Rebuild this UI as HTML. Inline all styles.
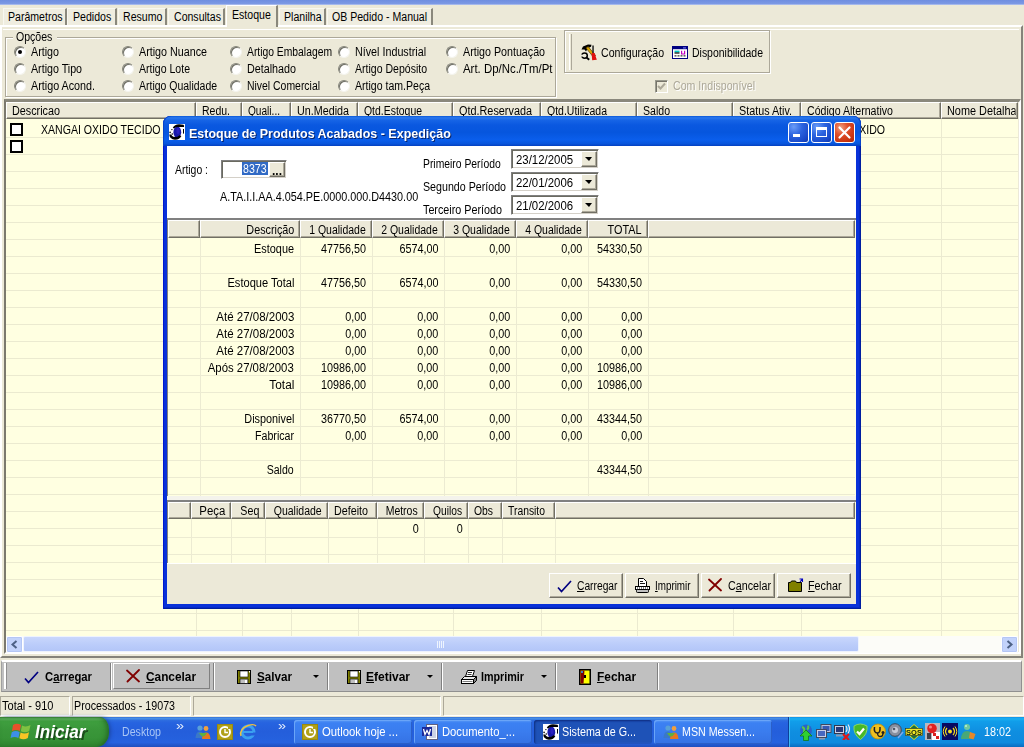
<!DOCTYPE html>
<html><head><meta charset="utf-8"><title>Sistema</title>
<style>
*{box-sizing:border-box;margin:0;padding:0}
html,body{width:1024px;height:747px;overflow:hidden;background:#ece9d8;font-family:"Liberation Sans",sans-serif;font-size:12px;color:#000}
div,span,i,b,u{position:absolute}
u{position:static}
.t{white-space:nowrap;line-height:14px;font-size:12px;transform:scaleX(.88)}
.w{color:#fff}
.tab{top:8px;height:17px;background:#efede0;border-right:2px solid #8a887c;border-left:1px solid #f8f7f0;border-top:1px solid #f8f7f0}
.tab.act{top:5px;height:22px;background:#ece9d8;z-index:2;border-left-color:#fff;border-top-color:#fff}
.grp{border:1px solid #aca899;box-shadow:1px 1px 0 #fff, inset 1px 1px 0 #fff}
.rbi{width:12px;height:12px;border-radius:50%;background:#fff;border:1px solid #85857a;border-right-color:#f4f4ee;border-bottom-color:#f4f4ee;box-shadow:inset 1px 1px 0 #6e6e64}
.dot{width:4px;height:4px;border-radius:50%;background:#000}
.hdr{background:#ece9d8;border-top:1px solid #fff;border-left:1px solid #fff;border-right:1px solid #716f64;border-bottom:1px solid #716f64;box-shadow:inset -1px -1px 0 #aca899}
.sunk{border:1px solid #808080;border-right-color:#fff;border-bottom-color:#fff;box-shadow:inset 1px 1px 0 #6a6a60, inset -1px -1px 0 #d4d0c8;background:#fff}
.btn{background:#ece9d8;border:1px solid #fff;border-right-color:#716f64;border-bottom-color:#716f64;box-shadow:inset -1px -1px 0 #aca899}
</style></head><body>

<div style="left:0;top:0;width:1024px;height:5px;background:linear-gradient(#6f8ee0 0,#7b98e4 70%,#b9c8ef 100%)"></div>
<div class="tab" style="left:3px;width:64px"></div>
<span class="t " style="top:10px;left:8px;transform-origin:0 0;z-index:3;">Parâmetros</span>
<div class="tab" style="left:67px;width:50px"></div>
<span class="t " style="top:10px;left:73px;transform-origin:0 0;z-index:3;">Pedidos</span>
<div class="tab" style="left:118px;width:49px"></div>
<span class="t " style="top:10px;left:123px;transform-origin:0 0;z-index:3;">Resumo</span>
<div class="tab" style="left:168px;width:57px"></div>
<span class="t " style="top:10px;left:174px;transform-origin:0 0;z-index:3;">Consultas</span>
<div class="tab act" style="left:226px;width:52px"></div>
<span class="t " style="top:8px;left:232px;transform-origin:0 0;z-index:3;">Estoque</span>
<div class="tab" style="left:279px;width:47px"></div>
<span class="t " style="top:10px;left:284px;transform-origin:0 0;z-index:3;">Planilha</span>
<div class="tab" style="left:327px;width:106px"></div>
<span class="t " style="top:10px;left:332px;transform-origin:0 0;z-index:3;">OB Pedido - Manual</span>
<div style="left:0;top:25px;width:1023px;height:633px;border-top:2px solid #fff;border-left:2px solid #fff;border-right:2px solid #85837a;border-bottom:2px solid #85837a;z-index:1"></div>
<div style="left:3px;top:29px;width:1016px;height:1px;background:#fff;z-index:1"></div>
<div style="left:0;top:0;width:1024px;height:747px;z-index:4;will-change:transform" id="main">
<div class="grp" style="left:5px;top:37px;width:551px;height:60px"></div>
<div style="left:13px;top:30px;width:44px;height:14px;background:#ece9d8"></div>
<span class="t " style="top:30px;left:16px;transform-origin:0 0;">Opções</span>
<i class="rbi" style="left:14px;top:46px"></i>
<i class="dot" style="left:18px;top:50px"></i>
<span class="t " style="top:44.5px;left:31px;transform-origin:0 0;transform:scaleX(0.893);">Artigo</span>
<i class="rbi" style="left:14px;top:63px"></i>
<span class="t " style="top:61.5px;left:31px;transform-origin:0 0;transform:scaleX(0.889);">Artigo Tipo</span>
<i class="rbi" style="left:14px;top:80px"></i>
<span class="t " style="top:78.5px;left:31px;transform-origin:0 0;transform:scaleX(0.897);">Artigo Acond.</span>
<i class="rbi" style="left:122px;top:46px"></i>
<span class="t " style="top:44.5px;left:139px;transform-origin:0 0;transform:scaleX(0.894);">Artigo Nuance</span>
<i class="rbi" style="left:122px;top:63px"></i>
<span class="t " style="top:61.5px;left:139px;transform-origin:0 0;transform:scaleX(0.879);">Artigo Lote</span>
<i class="rbi" style="left:122px;top:80px"></i>
<span class="t " style="top:78.5px;left:139px;transform-origin:0 0;transform:scaleX(0.873);">Artigo Qualidade</span>
<i class="rbi" style="left:230px;top:46px"></i>
<span class="t " style="top:44.5px;left:247px;transform-origin:0 0;transform:scaleX(0.861);">Artigo Embalagem</span>
<i class="rbi" style="left:230px;top:63px"></i>
<span class="t " style="top:61.5px;left:247px;transform-origin:0 0;transform:scaleX(0.896);">Detalhado</span>
<i class="rbi" style="left:230px;top:80px"></i>
<span class="t " style="top:78.5px;left:247px;transform-origin:0 0;transform:scaleX(0.869);">Nivel Comercial</span>
<i class="rbi" style="left:338px;top:46px"></i>
<span class="t " style="top:44.5px;left:355px;transform-origin:0 0;transform:scaleX(0.895);">Nível Industrial</span>
<i class="rbi" style="left:338px;top:63px"></i>
<span class="t " style="top:61.5px;left:355px;transform-origin:0 0;transform:scaleX(0.878);">Artigo Depósito</span>
<i class="rbi" style="left:338px;top:80px"></i>
<span class="t " style="top:78.5px;left:355px;transform-origin:0 0;transform:scaleX(0.879);">Artigo tam.Peça</span>
<i class="rbi" style="left:446px;top:46px"></i>
<span class="t " style="top:44.5px;left:463px;transform-origin:0 0;transform:scaleX(0.891);">Artigo Pontuação</span>
<i class="rbi" style="left:446px;top:63px"></i>
<span class="t " style="top:61.5px;left:463px;transform-origin:0 0;transform:scaleX(0.952);">Art. Dp/Nc./Tm/Pt</span>
<div class="grp" style="left:564px;top:30px;width:206px;height:43px"></div>
<div style="left:569px;top:34px;width:3px;height:36px;border-left:1px solid #fff;border-right:1px solid #aca899"></div>
<span class="t " style="top:46px;left:601px;transform-origin:0 0;transform:scaleX(0.883);">Configuração</span>
<span class="t " style="top:46px;left:692px;transform-origin:0 0;transform:scaleX(0.872);">Disponibilidade</span>
<div style="left:655px;top:80px;width:13px;height:13px;border:1px solid #9a9a8e;border-right-color:#fff;border-bottom-color:#fff;box-shadow:inset 1px 1px 0 #76746a;background:#ece9d8"></div>
<span class="t " style="top:80px;left:674px;transform-origin:0 0;transform:scaleX(0.885);color:#fff">Com Indisponível</span>
<span class="t " style="top:79px;left:673px;transform-origin:0 0;transform:scaleX(0.885);color:#aca899">Com Indisponível</span>
<div style="left:4px;top:99px;width:1017px;height:555px;background:#ffffe1;border:2px solid #7b796e;border-top:3px solid #8a887c;border-right-color:#fff;border-bottom-color:#fff;box-shadow:inset -1px -1px 0 #ece9d8"></div>
<div style="left:6px;top:137px;width:1012px;height:1px;background:#ebead0"></div>
<div style="left:6px;top:154px;width:1012px;height:1px;background:#ebead0"></div>
<div style="left:6px;top:171px;width:1012px;height:1px;background:#ebead0"></div>
<div style="left:6px;top:188px;width:1012px;height:1px;background:#ebead0"></div>
<div style="left:6px;top:205px;width:1012px;height:1px;background:#ebead0"></div>
<div style="left:6px;top:222px;width:1012px;height:1px;background:#ebead0"></div>
<div style="left:6px;top:239px;width:1012px;height:1px;background:#ebead0"></div>
<div style="left:6px;top:256px;width:1012px;height:1px;background:#ebead0"></div>
<div style="left:6px;top:273px;width:1012px;height:1px;background:#ebead0"></div>
<div style="left:6px;top:290px;width:1012px;height:1px;background:#ebead0"></div>
<div style="left:6px;top:307px;width:1012px;height:1px;background:#ebead0"></div>
<div style="left:6px;top:324px;width:1012px;height:1px;background:#ebead0"></div>
<div style="left:6px;top:341px;width:1012px;height:1px;background:#ebead0"></div>
<div style="left:6px;top:358px;width:1012px;height:1px;background:#ebead0"></div>
<div style="left:6px;top:375px;width:1012px;height:1px;background:#ebead0"></div>
<div style="left:6px;top:392px;width:1012px;height:1px;background:#ebead0"></div>
<div style="left:6px;top:409px;width:1012px;height:1px;background:#ebead0"></div>
<div style="left:6px;top:426px;width:1012px;height:1px;background:#ebead0"></div>
<div style="left:6px;top:443px;width:1012px;height:1px;background:#ebead0"></div>
<div style="left:6px;top:460px;width:1012px;height:1px;background:#ebead0"></div>
<div style="left:6px;top:477px;width:1012px;height:1px;background:#ebead0"></div>
<div style="left:6px;top:494px;width:1012px;height:1px;background:#ebead0"></div>
<div style="left:6px;top:511px;width:1012px;height:1px;background:#ebead0"></div>
<div style="left:6px;top:528px;width:1012px;height:1px;background:#ebead0"></div>
<div style="left:6px;top:545px;width:1012px;height:1px;background:#ebead0"></div>
<div style="left:6px;top:562px;width:1012px;height:1px;background:#ebead0"></div>
<div style="left:6px;top:579px;width:1012px;height:1px;background:#ebead0"></div>
<div style="left:6px;top:596px;width:1012px;height:1px;background:#ebead0"></div>
<div style="left:6px;top:613px;width:1012px;height:1px;background:#ebead0"></div>
<div style="left:6px;top:630px;width:1012px;height:1px;background:#ebead0"></div>
<div class="hdr" style="left:6px;top:102px;width:190px;height:17px"></div>
<span class="t " style="top:104px;left:12px;transform-origin:0 0;transform:scaleX(0.9);">Descricao</span>
<div class="hdr" style="left:196px;top:102px;width:46px;height:17px"></div>
<span class="t " style="top:104px;left:202px;transform-origin:0 0;transform:scaleX(0.875);">Redu.</span>
<div style="left:196px;top:119px;width:1px;height:517px;background:#ebead0"></div>
<div class="hdr" style="left:242px;top:102px;width:49px;height:17px"></div>
<span class="t " style="top:104px;left:248px;transform-origin:0 0;transform:scaleX(0.842);">Quali...</span>
<div style="left:242px;top:119px;width:1px;height:517px;background:#ebead0"></div>
<div class="hdr" style="left:291px;top:102px;width:67px;height:17px"></div>
<span class="t " style="top:104px;left:297px;transform-origin:0 0;transform:scaleX(0.896);">Un.Medida</span>
<div style="left:291px;top:119px;width:1px;height:517px;background:#ebead0"></div>
<div class="hdr" style="left:358px;top:102px;width:95px;height:17px"></div>
<span class="t " style="top:104px;left:364px;transform-origin:0 0;transform:scaleX(0.87);">Qtd.Estoque</span>
<div style="left:358px;top:119px;width:1px;height:517px;background:#ebead0"></div>
<div class="hdr" style="left:453px;top:102px;width:88px;height:17px"></div>
<span class="t " style="top:104px;left:459px;transform-origin:0 0;transform:scaleX(0.905);">Qtd.Reservada</span>
<div style="left:453px;top:119px;width:1px;height:517px;background:#ebead0"></div>
<div class="hdr" style="left:541px;top:102px;width:96px;height:17px"></div>
<span class="t " style="top:104px;left:547px;transform-origin:0 0;transform:scaleX(0.874);">Qtd.Utilizada</span>
<div style="left:541px;top:119px;width:1px;height:517px;background:#ebead0"></div>
<div class="hdr" style="left:637px;top:102px;width:96px;height:17px"></div>
<span class="t " style="top:104px;left:643px;transform-origin:0 0;">Saldo</span>
<div style="left:637px;top:119px;width:1px;height:517px;background:#ebead0"></div>
<div class="hdr" style="left:733px;top:102px;width:68px;height:17px"></div>
<span class="t " style="top:104px;left:739px;transform-origin:0 0;transform:scaleX(0.897);">Status Ativ.</span>
<div style="left:733px;top:119px;width:1px;height:517px;background:#ebead0"></div>
<div class="hdr" style="left:801px;top:102px;width:140px;height:17px"></div>
<span class="t " style="top:104px;left:807px;transform-origin:0 0;transform:scaleX(0.883);">Código Alternativo</span>
<div style="left:801px;top:119px;width:1px;height:517px;background:#ebead0"></div>
<div class="hdr" style="left:941px;top:102px;width:77px;height:17px"></div>
<span class="t " style="top:104px;left:947px;transform-origin:0 0;transform:scaleX(0.907);clip-path:inset(0 7px 0 0);">Nome Detalhac</span>
<div style="left:941px;top:119px;width:1px;height:517px;background:#ebead0"></div>
<div style="left:10px;top:123px;width:13px;height:13px;border:2px solid #000;background:#fff"></div>
<div style="left:10px;top:140px;width:13px;height:13px;border:2px solid #000;background:#fff"></div>
<span class="t " style="top:122.5px;left:41px;transform-origin:0 0;">XANGAI OXIDO TECIDO</span>
<span class="t " style="top:122.5px;left:808px;transform-origin:0 0;transform:scaleX(0.882);">XANGAI OXIDO</span>
<div style="left:6px;top:636px;width:1012px;height:17px;background:#fcfcf8"></div>
<div style="left:6px;top:636px;width:17px;height:17px;background:#c3d3fb;border:1px solid #fff;border-radius:2px;box-shadow:inset 0 0 0 1px #b4c6f5"></div>
<div style="left:1001px;top:636px;width:17px;height:17px;background:#c3d3fb;border:1px solid #fff;border-radius:2px;box-shadow:inset 0 0 0 1px #b4c6f5"></div>
<div style="left:23px;top:636px;width:836px;height:16px;background:linear-gradient(#c9d7fc,#bccdfa 50%,#b3c6f8);border:1px solid #eef3fe;border-radius:2px"></div>
<div style="left:1px;top:660px;width:1021px;height:32px;background:#c0c0c0;border-top:2px solid #fff;border-left:1px solid #a0a0a0;border-bottom:1px solid #909090;border-right:1px solid #909090"></div>
<div style="left:0;top:696px;width:1024px;height:21px;background:#ece9d8"></div>
<div style="left:4px;top:663px;width:3px;height:26px;border-left:2px solid #fff;border-right:1px solid #909090"></div>
<div style="left:110px;top:663px;width:2px;height:27px;border-left:1px solid #808080;border-right:1px solid #fff"></div>
<div style="left:213px;top:663px;width:2px;height:27px;border-left:1px solid #808080;border-right:1px solid #fff"></div>
<div style="left:327px;top:663px;width:2px;height:27px;border-left:1px solid #808080;border-right:1px solid #fff"></div>
<div style="left:441px;top:663px;width:2px;height:27px;border-left:1px solid #808080;border-right:1px solid #fff"></div>
<div style="left:555px;top:663px;width:2px;height:27px;border-left:1px solid #808080;border-right:1px solid #fff"></div>
<div style="left:657px;top:663px;width:2px;height:27px;border-left:1px solid #808080;border-right:1px solid #fff"></div>
<div style="left:113px;top:663px;width:97px;height:26px;border:1px solid #fff;border-right-color:#808080;border-bottom-color:#808080"></div>
<span class="t " style="top:670px;left:45px;transform-origin:0 0;font-weight:bold;transform:scaleX(0.939);">C<u>a</u>rregar</span>
<span class="t " style="top:670px;left:146px;transform-origin:0 0;font-weight:bold;transform:scaleX(0.986);"><u>C</u>ancelar</span>
<span class="t " style="top:670px;left:257px;transform-origin:0 0;font-weight:bold;transform:scaleX(0.972);"><u>S</u>alvar</span>
<span class="t " style="top:670px;left:366px;transform-origin:0 0;font-weight:bold;transform:scaleX(1.0);"><u>E</u>fetivar</span>
<span class="t " style="top:670px;left:481px;transform-origin:0 0;font-weight:bold;transform:scaleX(0.896);">Imprimir</span>
<span class="t " style="top:670px;left:597px;transform-origin:0 0;font-weight:bold;transform:scaleX(0.991);"><u>F</u>echar</span>
<div style="left:313px;top:675px;width:0;height:0;border-left:3px solid transparent;border-right:3px solid transparent;border-top:3px solid #000"></div>
<div style="left:427px;top:675px;width:0;height:0;border-left:3px solid transparent;border-right:3px solid transparent;border-top:3px solid #000"></div>
<div style="left:541px;top:675px;width:0;height:0;border-left:3px solid transparent;border-right:3px solid transparent;border-top:3px solid #000"></div>
<div style="left:0px;top:696px;width:70px;height:20px;border:1px solid #aca899;border-right-color:#fff;border-bottom-color:#fff"></div>
<div style="left:72px;top:696px;width:119px;height:20px;border:1px solid #aca899;border-right-color:#fff;border-bottom-color:#fff"></div>
<div style="left:193px;top:696px;width:248px;height:20px;border:1px solid #aca899;border-right-color:#fff;border-bottom-color:#fff"></div>
<div style="left:443px;top:696px;width:581px;height:20px;border:1px solid #aca899;border-right-color:#fff;border-bottom-color:#fff"></div>
<span class="t " style="top:699px;left:2px;transform-origin:0 0;transform:scaleX(0.919);">Total - 910</span>
<span class="t " style="top:699px;left:74px;transform-origin:0 0;transform:scaleX(0.891);">Processados - 19073</span>
<div style="left:0;top:717px;width:1024px;height:30px;background:linear-gradient(#3168d5 0,#4993e6 4%,#2c6be0 12%,#2663e0 20%,#245edb 50%,#2562df 85%,#1f4ebd 100%)"></div>
<div style="left:0;top:717px;width:109px;height:30px;border-radius:0 9px 12px 0/0 13px 15px 0;background:linear-gradient(#388438 0,#5eb05e 6%,#3f9f3f 14%,#3a973a 40%,#379337 70%,#2f862f 100%);box-shadow:inset -3px 0 6px -2px #1e5a1e, 2px 0 4px -1px #1a3f96"></div>
<span class="t " style="top:723.5px;left:36.5px;transform-origin:0 0;font-size:18px;font-weight:bold;font-style:italic;transform:scaleX(0.952);color:#1c4f1c;line-height:20px;">Iniciar</span>
<span class="t " style="top:722.3px;left:35.3px;transform-origin:0 0;font-size:18px;font-weight:bold;font-style:italic;transform:scaleX(0.952);color:#fff;line-height:20px;">Iniciar</span>
<span class="t " style="top:725px;left:122px;transform-origin:0 0;transform:scaleX(0.886);color:#a9c6f5;">Desktop</span>
<span class="t " style="top:719px;left:176px;transform-origin:0 0;font-size:13px;transform:scaleX(1.106);color:#dfe9fb;">»</span>
<span class="t " style="top:719px;left:278px;transform-origin:0 0;font-size:13px;transform:scaleX(1.106);color:#dfe9fb;">»</span>
<div style="left:294px;top:720px;width:118px;height:24px;border-radius:3px;background:linear-gradient(#5a9af5 0,#3c81f3 12%,#3a7cee 50%,#3572e4 100%);box-shadow:inset 1px 1px 0 #6aa5f8, inset -1px -1px 0 #2a5fc8"></div>
<span class="t " style="top:725px;left:322px;transform-origin:0 0;transform:scaleX(0.942);color:#fff;">Outlook hoje ...</span>
<div style="left:414px;top:720px;width:118px;height:24px;border-radius:3px;background:linear-gradient(#5a9af5 0,#3c81f3 12%,#3a7cee 50%,#3572e4 100%);box-shadow:inset 1px 1px 0 #6aa5f8, inset -1px -1px 0 #2a5fc8"></div>
<span class="t " style="top:725px;left:442px;transform-origin:0 0;transform:scaleX(0.936);color:#fff;">Documento_...</span>
<div style="left:534px;top:720px;width:118px;height:24px;border-radius:3px;background:linear-gradient(#1a44ae 0,#1e52b7 10%,#1e52b7 90%,#2458c4 100%);box-shadow:inset 1px 1px 2px #0e2f80"></div>
<span class="t " style="top:725px;left:562px;transform-origin:0 0;transform:scaleX(0.895);color:#fff;">Sistema de G...</span>
<div style="left:654px;top:720px;width:118px;height:24px;border-radius:3px;background:linear-gradient(#5a9af5 0,#3c81f3 12%,#3a7cee 50%,#3572e4 100%);box-shadow:inset 1px 1px 0 #6aa5f8, inset -1px -1px 0 #2a5fc8"></div>
<span class="t " style="top:725px;left:682px;transform-origin:0 0;transform:scaleX(0.89);color:#fff;">MSN Messen...</span>
<div style="left:788px;top:717px;width:236px;height:30px;background:linear-gradient(#1290e8 0,#19b0f2 6%,#119eea 14%,#0f8ee0 50%,#0e8ade 85%,#0a6bc0 100%);border-left:1px solid #0c3f9b;box-shadow:inset 1px 0 0 #3fbaf5"></div>
<span class="t " style="top:725px;left:984px;transform-origin:0 0;transform:scaleX(0.9);color:#fff;">18:02</span>
<div style="left:163px;top:116px;width:698px;height:493px;background:#0831d9;border-radius:8px 8px 0 0;box-shadow:inset 1px 0 0 #0019cf, inset -1px -1px 0 #001ea0, inset -2px -2px 0 #0429c4"></div>
<div style="left:163px;top:116px;width:698px;height:30px;border-radius:8px 8px 0 0;background:linear-gradient(180deg,#0a58d8 0,#2a78ee 6%,#1664e6 14%,#0a58e0 30%,#0656de 55%,#0a5eec 80%,#0855dc 92%,#0440c0 100%);box-shadow:inset 1px 0 0 #0843c8, inset -1px 0 0 #0843c8"></div>
<span class="t " style="top:126.5px;left:190px;transform-origin:0 0;font-size:13.5px;font-weight:bold;transform:scaleX(0.925);color:#0a246a;line-height:16px;">Estoque de Produtos Acabados - Expedição</span>
<span class="t " style="top:125.5px;left:189px;transform-origin:0 0;font-size:13.5px;font-weight:bold;transform:scaleX(0.925);color:#fff;line-height:16px;">Estoque de Produtos Acabados - Expedição</span>
<div style="left:167px;top:146px;width:689px;height:458px;background:#ece9d8"></div>
<div style="left:167px;top:146px;width:689px;height:72px;background:#fff"></div>
<span class="t " style="top:163px;left:175px;transform-origin:0 0;transform:scaleX(0.868);">Artigo :</span>
<div class="sunk" style="left:221px;top:160px;width:66px;height:19px"></div>
<div style="left:242px;top:162px;width:26px;height:13px;background:#316ac5"></div>
<span class="t " style="top:162px;left:242.5px;transform-origin:0 0;transform:scaleX(0.881);color:#fff;">8373</span>
<div class="btn" style="left:269px;top:162px;width:16px;height:15px"></div>
<span class="t " style="top:164px;left:272px;transform-origin:0 0;font-weight:bold;transform:scaleX(1.002);">...</span>
<span class="t " style="top:190px;left:220px;transform-origin:0 0;transform:scaleX(0.901);">A.TA.I.I.AA.4.054.PE.0000.000.D4430.00</span>
<span class="t " style="top:157px;left:423px;transform-origin:0 0;transform:scaleX(0.863);">Primeiro Período</span>
<div class="sunk" style="left:511px;top:149px;width:88px;height:20px"></div>
<div class="btn" style="left:581px;top:151px;width:16px;height:16px"></div>
<div style="left:585px;top:157px;width:0;height:0;border-left:4px solid transparent;border-right:3px solid transparent;border-top:4px solid #000"></div>
<span class="t " style="top:153px;left:516px;transform-origin:0 0;transform:scaleX(0.95);">23/12/2005</span>
<span class="t " style="top:180px;left:423px;transform-origin:0 0;transform:scaleX(0.889);">Segundo Período</span>
<div class="sunk" style="left:511px;top:172px;width:88px;height:20px"></div>
<div class="btn" style="left:581px;top:174px;width:16px;height:16px"></div>
<div style="left:585px;top:180px;width:0;height:0;border-left:4px solid transparent;border-right:3px solid transparent;border-top:4px solid #000"></div>
<span class="t " style="top:176px;left:516px;transform-origin:0 0;transform:scaleX(0.95);">22/01/2006</span>
<span class="t " style="top:202.5px;left:423px;transform-origin:0 0;transform:scaleX(0.897);">Terceiro Período</span>
<div class="sunk" style="left:511px;top:195px;width:88px;height:20px"></div>
<div class="btn" style="left:581px;top:197px;width:16px;height:16px"></div>
<div style="left:585px;top:203px;width:0;height:0;border-left:4px solid transparent;border-right:3px solid transparent;border-top:4px solid #000"></div>
<span class="t " style="top:199px;left:516px;transform-origin:0 0;transform:scaleX(0.95);">21/02/2006</span>
<div style="left:167px;top:218px;width:689px;height:278px;background:#ffffe1;border-top:2px solid #808080;border-left:1px solid #808080"></div>
<div class="hdr" style="left:168px;top:220px;width:32px;height:18px"></div>
<div class="hdr" style="left:200px;top:220px;width:100px;height:18px"></div>
<span class="t " style="top:223px;right:730px;transform-origin:100% 0;transform:scaleX(0.9);">Descrição</span>
<div style="left:200px;top:238px;width:1px;height:258px;background:#ecebd2"></div>
<div class="hdr" style="left:300px;top:220px;width:72px;height:18px"></div>
<span class="t " style="top:223px;right:658px;transform-origin:100% 0;transform:scaleX(0.873);">1 Qualidade</span>
<div style="left:300px;top:238px;width:1px;height:258px;background:#ecebd2"></div>
<div class="hdr" style="left:372px;top:220px;width:72px;height:18px"></div>
<span class="t " style="top:223px;right:586px;transform-origin:100% 0;transform:scaleX(0.873);">2 Qualidade</span>
<div style="left:372px;top:238px;width:1px;height:258px;background:#ecebd2"></div>
<div class="hdr" style="left:444px;top:220px;width:72px;height:18px"></div>
<span class="t " style="top:223px;right:514px;transform-origin:100% 0;transform:scaleX(0.873);">3 Qualidade</span>
<div style="left:444px;top:238px;width:1px;height:258px;background:#ecebd2"></div>
<div class="hdr" style="left:516px;top:220px;width:72px;height:18px"></div>
<span class="t " style="top:223px;right:442px;transform-origin:100% 0;transform:scaleX(0.873);">4 Qualidade</span>
<div style="left:516px;top:238px;width:1px;height:258px;background:#ecebd2"></div>
<div class="hdr" style="left:588px;top:220px;width:60px;height:18px"></div>
<span class="t " style="top:223px;right:382px;transform-origin:100% 0;transform:scaleX(0.906);">TOTAL</span>
<div style="left:588px;top:238px;width:1px;height:258px;background:#ecebd2"></div>
<div class="hdr" style="left:648px;top:220px;width:207px;height:18px"></div>
<div style="left:648px;top:238px;width:1px;height:258px;background:#ecebd2"></div>
<div style="left:168px;top:256px;width:687px;height:1px;background:#ecebd2"></div>
<div style="left:168px;top:273px;width:687px;height:1px;background:#ecebd2"></div>
<div style="left:168px;top:290px;width:687px;height:1px;background:#ecebd2"></div>
<div style="left:168px;top:307px;width:687px;height:1px;background:#ecebd2"></div>
<div style="left:168px;top:324px;width:687px;height:1px;background:#ecebd2"></div>
<div style="left:168px;top:341px;width:687px;height:1px;background:#ecebd2"></div>
<div style="left:168px;top:358px;width:687px;height:1px;background:#ecebd2"></div>
<div style="left:168px;top:375px;width:687px;height:1px;background:#ecebd2"></div>
<div style="left:168px;top:392px;width:687px;height:1px;background:#ecebd2"></div>
<div style="left:168px;top:409px;width:687px;height:1px;background:#ecebd2"></div>
<div style="left:168px;top:426px;width:687px;height:1px;background:#ecebd2"></div>
<div style="left:168px;top:443px;width:687px;height:1px;background:#ecebd2"></div>
<div style="left:168px;top:460px;width:687px;height:1px;background:#ecebd2"></div>
<div style="left:168px;top:477px;width:687px;height:1px;background:#ecebd2"></div>
<div style="left:168px;top:494px;width:687px;height:1px;background:#ecebd2"></div>
<span class="t " style="top:242px;right:730px;transform-origin:100% 0;transform:scaleX(0.909);">Estoque</span>
<span class="t " style="top:242px;right:658px;transform-origin:100% 0;transform:scaleX(0.899);">47756,50</span>
<span class="t " style="top:242px;right:586px;transform-origin:100% 0;transform:scaleX(0.899);">6574,00</span>
<span class="t " style="top:242px;right:514px;transform-origin:100% 0;transform:scaleX(0.9);">0,00</span>
<span class="t " style="top:242px;right:442px;transform-origin:100% 0;transform:scaleX(0.9);">0,00</span>
<span class="t " style="top:242px;right:382px;transform-origin:100% 0;transform:scaleX(0.899);">54330,50</span>
<span class="t " style="top:276px;right:730px;transform-origin:100% 0;transform:scaleX(0.925);">Estoque Total</span>
<span class="t " style="top:276px;right:658px;transform-origin:100% 0;transform:scaleX(0.899);">47756,50</span>
<span class="t " style="top:276px;right:586px;transform-origin:100% 0;transform:scaleX(0.899);">6574,00</span>
<span class="t " style="top:276px;right:514px;transform-origin:100% 0;transform:scaleX(0.9);">0,00</span>
<span class="t " style="top:276px;right:442px;transform-origin:100% 0;transform:scaleX(0.9);">0,00</span>
<span class="t " style="top:276px;right:382px;transform-origin:100% 0;transform:scaleX(0.899);">54330,50</span>
<span class="t " style="top:310px;right:730px;transform-origin:100% 0;transform:scaleX(0.959);">Até 27/08/2003</span>
<span class="t " style="top:310px;right:658px;transform-origin:100% 0;transform:scaleX(0.9);">0,00</span>
<span class="t " style="top:310px;right:586px;transform-origin:100% 0;transform:scaleX(0.9);">0,00</span>
<span class="t " style="top:310px;right:514px;transform-origin:100% 0;transform:scaleX(0.9);">0,00</span>
<span class="t " style="top:310px;right:442px;transform-origin:100% 0;transform:scaleX(0.9);">0,00</span>
<span class="t " style="top:310px;right:382px;transform-origin:100% 0;transform:scaleX(0.9);">0,00</span>
<span class="t " style="top:327px;right:730px;transform-origin:100% 0;transform:scaleX(0.959);">Até 27/08/2003</span>
<span class="t " style="top:327px;right:658px;transform-origin:100% 0;transform:scaleX(0.9);">0,00</span>
<span class="t " style="top:327px;right:586px;transform-origin:100% 0;transform:scaleX(0.9);">0,00</span>
<span class="t " style="top:327px;right:514px;transform-origin:100% 0;transform:scaleX(0.9);">0,00</span>
<span class="t " style="top:327px;right:442px;transform-origin:100% 0;transform:scaleX(0.9);">0,00</span>
<span class="t " style="top:327px;right:382px;transform-origin:100% 0;transform:scaleX(0.9);">0,00</span>
<span class="t " style="top:344px;right:730px;transform-origin:100% 0;transform:scaleX(0.959);">Até 27/08/2003</span>
<span class="t " style="top:344px;right:658px;transform-origin:100% 0;transform:scaleX(0.9);">0,00</span>
<span class="t " style="top:344px;right:586px;transform-origin:100% 0;transform:scaleX(0.9);">0,00</span>
<span class="t " style="top:344px;right:514px;transform-origin:100% 0;transform:scaleX(0.9);">0,00</span>
<span class="t " style="top:344px;right:442px;transform-origin:100% 0;transform:scaleX(0.9);">0,00</span>
<span class="t " style="top:344px;right:382px;transform-origin:100% 0;transform:scaleX(0.9);">0,00</span>
<span class="t " style="top:361px;right:730px;transform-origin:100% 0;transform:scaleX(0.948);">Após 27/08/2003</span>
<span class="t " style="top:361px;right:658px;transform-origin:100% 0;transform:scaleX(0.899);">10986,00</span>
<span class="t " style="top:361px;right:586px;transform-origin:100% 0;transform:scaleX(0.9);">0,00</span>
<span class="t " style="top:361px;right:514px;transform-origin:100% 0;transform:scaleX(0.9);">0,00</span>
<span class="t " style="top:361px;right:442px;transform-origin:100% 0;transform:scaleX(0.9);">0,00</span>
<span class="t " style="top:361px;right:382px;transform-origin:100% 0;transform:scaleX(0.899);">10986,00</span>
<span class="t " style="top:378px;right:730px;transform-origin:100% 0;transform:scaleX(0.986);">Total</span>
<span class="t " style="top:378px;right:658px;transform-origin:100% 0;transform:scaleX(0.899);">10986,00</span>
<span class="t " style="top:378px;right:586px;transform-origin:100% 0;transform:scaleX(0.9);">0,00</span>
<span class="t " style="top:378px;right:514px;transform-origin:100% 0;transform:scaleX(0.9);">0,00</span>
<span class="t " style="top:378px;right:442px;transform-origin:100% 0;transform:scaleX(0.9);">0,00</span>
<span class="t " style="top:378px;right:382px;transform-origin:100% 0;transform:scaleX(0.899);">10986,00</span>
<span class="t " style="top:412px;right:730px;transform-origin:100% 0;transform:scaleX(0.903);">Disponivel</span>
<span class="t " style="top:412px;right:658px;transform-origin:100% 0;transform:scaleX(0.899);">36770,50</span>
<span class="t " style="top:412px;right:586px;transform-origin:100% 0;transform:scaleX(0.899);">6574,00</span>
<span class="t " style="top:412px;right:514px;transform-origin:100% 0;transform:scaleX(0.9);">0,00</span>
<span class="t " style="top:412px;right:442px;transform-origin:100% 0;transform:scaleX(0.9);">0,00</span>
<span class="t " style="top:412px;right:382px;transform-origin:100% 0;transform:scaleX(0.899);">43344,50</span>
<span class="t " style="top:429px;right:730px;transform-origin:100% 0;transform:scaleX(0.886);">Fabricar</span>
<span class="t " style="top:429px;right:658px;transform-origin:100% 0;transform:scaleX(0.9);">0,00</span>
<span class="t " style="top:429px;right:586px;transform-origin:100% 0;transform:scaleX(0.9);">0,00</span>
<span class="t " style="top:429px;right:514px;transform-origin:100% 0;transform:scaleX(0.9);">0,00</span>
<span class="t " style="top:429px;right:442px;transform-origin:100% 0;transform:scaleX(0.9);">0,00</span>
<span class="t " style="top:429px;right:382px;transform-origin:100% 0;transform:scaleX(0.9);">0,00</span>
<span class="t " style="top:463px;right:730px;transform-origin:100% 0;">Saldo</span>
<span class="t " style="top:463px;right:382px;transform-origin:100% 0;transform:scaleX(0.899);">43344,50</span>
<div style="left:167px;top:496px;width:689px;height:5px;background:#f4f3ec"></div>
<div style="left:167px;top:500px;width:689px;height:63px;background:#ffffe1;border-top:2px solid #808080;border-left:1px solid #808080"></div>
<div class="hdr" style="left:168px;top:502px;width:23px;height:17px"></div>
<div class="hdr" style="left:191px;top:502px;width:40px;height:17px"></div>
<span class="t " style="top:504px;right:799px;transform-origin:100% 0;transform:scaleX(0.951);">Peça</span>
<div style="left:191px;top:519px;width:1px;height:44px;background:#ecebd2"></div>
<div class="hdr" style="left:231px;top:502px;width:34px;height:17px"></div>
<span class="t " style="top:504px;right:765px;transform-origin:100% 0;transform:scaleX(0.89);">Seq</span>
<div style="left:231px;top:519px;width:1px;height:44px;background:#ecebd2"></div>
<div class="hdr" style="left:265px;top:502px;width:63px;height:17px"></div>
<span class="t " style="top:504px;right:702px;transform-origin:100% 0;transform:scaleX(0.877);">Qualidade</span>
<div style="left:265px;top:519px;width:1px;height:44px;background:#ecebd2"></div>
<div class="hdr" style="left:328px;top:502px;width:49px;height:17px"></div>
<span class="t " style="top:504px;left:334px;transform-origin:0 0;transform:scaleX(0.894);">Defeito</span>
<div style="left:328px;top:519px;width:1px;height:44px;background:#ecebd2"></div>
<div class="hdr" style="left:377px;top:502px;width:47px;height:17px"></div>
<span class="t " style="top:504px;right:606px;transform-origin:100% 0;transform:scaleX(0.873);">Metros</span>
<div style="left:377px;top:519px;width:1px;height:44px;background:#ecebd2"></div>
<div class="hdr" style="left:424px;top:502px;width:44px;height:17px"></div>
<span class="t " style="top:504px;right:562px;transform-origin:100% 0;transform:scaleX(0.853);">Quilos</span>
<div style="left:424px;top:519px;width:1px;height:44px;background:#ecebd2"></div>
<div class="hdr" style="left:468px;top:502px;width:34px;height:17px"></div>
<span class="t " style="top:504px;left:474px;transform-origin:0 0;transform:scaleX(0.864);">Obs</span>
<div style="left:468px;top:519px;width:1px;height:44px;background:#ecebd2"></div>
<div class="hdr" style="left:502px;top:502px;width:53px;height:17px"></div>
<span class="t " style="top:504px;left:508px;transform-origin:0 0;transform:scaleX(0.862);">Transito</span>
<div style="left:502px;top:519px;width:1px;height:44px;background:#ecebd2"></div>
<div class="hdr" style="left:555px;top:502px;width:300px;height:17px"></div>
<div style="left:555px;top:519px;width:1px;height:44px;background:#ecebd2"></div>
<div style="left:168px;top:537px;width:687px;height:1px;background:#ecebd2"></div>
<div style="left:168px;top:554px;width:687px;height:1px;background:#ecebd2"></div>
<span class="t " style="top:522px;right:605px;transform-origin:100% 0;transform:scaleX(0.899);">0</span>
<span class="t " style="top:522px;right:561px;transform-origin:100% 0;transform:scaleX(0.899);">0</span>
<div style="left:167px;top:563px;width:689px;height:41px;background:#ece9d8;border-top:1px solid #fff"></div>
<div class="btn" style="left:549px;top:573px;width:74px;height:25px"></div>
<span class="t " style="top:579px;left:577px;transform-origin:0 0;transform:scaleX(0.855);"><u>C</u>arregar</span>
<div class="btn" style="left:625px;top:573px;width:74px;height:25px"></div>
<span class="t " style="top:579px;left:655px;transform-origin:0 0;transform:scaleX(0.819);"><u>I</u>mprimir</span>
<div class="btn" style="left:701px;top:573px;width:74px;height:25px"></div>
<span class="t " style="top:579px;left:728px;transform-origin:0 0;transform:scaleX(0.895);">C<u>a</u>ncelar</span>
<div class="btn" style="left:777px;top:573px;width:74px;height:25px"></div>
<span class="t " style="top:579px;left:808px;transform-origin:0 0;transform:scaleX(0.897);"><u>F</u>echar</span>
<svg style="position:absolute;left:581px;top:44px;" width="17" height="17" viewBox="0 0 17 17"><path d="M0.5 5.5 L2 2.5 L7 0.5 L10.5 0.8 L10 2.8 L7 4 L5 7.5 L3.5 5.5 Z" fill="#000"/><path d="M5 4 L7.2 2.6 L14.5 11.5 L12.3 13 Z" fill="#d8a800" stroke="#503000" stroke-width="0.7"/><path d="M11.3 1.5 L12.8 1.5 L12.8 9.5 L11.3 9.5 Z" fill="#202020"/><path d="M10.6 9 L13.6 9 L15.8 15.8 L11.2 16.3 Z" fill="#e01010"/><circle cx="3.6" cy="11.6" r="2.7" fill="none" stroke="#000" stroke-width="1.5"/><path d="M5.2 13.2 L8.2 15.8" stroke="#000" stroke-width="1.8"/><rect x="0" y="10.6" width="3" height="2" fill="#ece9d8"/></svg>
<svg style="position:absolute;left:672px;top:46px;" width="16" height="13" viewBox="0 0 16 13"><rect x="0.5" y="0.5" width="15" height="12" fill="#fff" stroke="#000080" stroke-width="1"/><rect x="1" y="1" width="14" height="2.2" fill="#000080"/><rect x="11" y="1.4" width="3" height="1" fill="#8080ff"/><rect x="2.5" y="4.6" width="5" height="1.8" fill="#00c8c8"/><rect x="2.5" y="6.4" width="5" height="1.2" fill="#000"/><path d="M9.6 4.8 v3.2 h3 v-3.2" fill="none" stroke="#c000c0" stroke-width="1.2"/><path d="M2.5 9.9h11" stroke="#000" stroke-width="1" stroke-dasharray="2 1"/></svg>
<svg style="position:absolute;left:24px;top:671px;" width="15" height="13" viewBox="0 0 15 13"><path d="M1 7.5 L4.5 11.5 L14 1" fill="none" stroke="#000080" stroke-width="1.7" stroke-linejoin="miter"/></svg>
<svg style="position:absolute;left:126px;top:669px;" width="15" height="14" viewBox="0 0 15 14"><path d="M1 1.5 L13 12.5 M13 1 L1.5 12.5" fill="none" stroke="#800000" stroke-width="1.8" stroke-linecap="round"/></svg>
<svg style="position:absolute;left:237px;top:670px;" width="14" height="14" viewBox="0 0 14 14"><rect x="0.5" y="0.5" width="13" height="13" fill="#808000" stroke="#000"/><rect x="3" y="1" width="8" height="6" fill="#fff" stroke="#000" stroke-width="0.6"/><rect x="3" y="9" width="8" height="4.5" fill="#c0c0c0" stroke="#000" stroke-width="0.6"/><rect x="8" y="10" width="2" height="3" fill="#fff"/><rect x="12" y="1" width="1" height="1.5" fill="#fff"/></svg>
<svg style="position:absolute;left:347px;top:670px;" width="14" height="14" viewBox="0 0 14 14"><rect x="0.5" y="0.5" width="13" height="13" fill="#808000" stroke="#000"/><rect x="3" y="1" width="8" height="6" fill="#fff" stroke="#000" stroke-width="0.6"/><rect x="3" y="9" width="8" height="4.5" fill="#c0c0c0" stroke="#000" stroke-width="0.6"/><rect x="8" y="10" width="2" height="3" fill="#fff"/><rect x="12" y="1" width="1" height="1.5" fill="#fff"/></svg>
<svg style="position:absolute;left:461px;top:670px;" width="16" height="14" viewBox="0 0 16 14"><path d="M4.5 6.5 L6.5 0.5 L13.5 0.5 L11.5 6.5 Z" fill="#fff" stroke="#000"/><path d="M7 2.5h4M6.5 4.5h4" stroke="#000" stroke-width="0.8"/><path d="M0.5 9.5 L3.5 6.5 L15.5 6.5 L12.5 9.5 Z" fill="#e8e8e8" stroke="#000"/><rect x="0.5" y="9.5" width="12" height="4" fill="#fff" stroke="#000"/><path d="M12.5 9.5 L15.5 6.5 L15.5 10.5 L12.5 13.5 Z" fill="#808080" stroke="#000"/><path d="M1.5 11.5h10" stroke="#808080"/></svg>
<svg style="position:absolute;left:579px;top:669px;" width="12" height="16" viewBox="0 0 12 16"><rect x="0.75" y="0.75" width="10.5" height="14.5" fill="#ffff00" stroke="#000" stroke-width="1.5"/><path d="M1.5 1.5 H5.5 L4.5 14.5 H1.5 Z" fill="#800000"/><rect x="5" y="6" width="2" height="3" fill="#000"/><rect x="2" y="2" width="2" height="2" fill="#4080c0"/></svg>
<svg style="position:absolute;left:557px;top:580px;" width="15" height="13" viewBox="0 0 15 13"><path d="M1 7.5 L4.5 11.5 L14 1" fill="none" stroke="#000080" stroke-width="1.7" stroke-linejoin="miter"/></svg>
<svg style="position:absolute;left:634px;top:578px;" width="17" height="16" viewBox="0 0 17 16"><path d="M4.5 8 V0.5 H9.5 L12.5 3.5 V8" fill="#fff" stroke="#000"/><path d="M6 3.5h3M6 5.5h5" stroke="#000" stroke-width="0.9"/><rect x="1.5" y="8.5" width="14" height="3" fill="#fff" stroke="#000"/><path d="M3 10h11" stroke="#000" stroke-dasharray="1 1"/><rect x="2.5" y="11.5" width="12" height="3" rx="1" fill="#c0c0c0" stroke="#000"/></svg>
<svg style="position:absolute;left:708px;top:578px;" width="15" height="14" viewBox="0 0 15 14"><path d="M1 1.5 L13 12.5 M13 1 L1.5 12.5" fill="none" stroke="#800000" stroke-width="1.8" stroke-linecap="round"/></svg>
<svg style="position:absolute;left:788px;top:578px;" width="16" height="14" viewBox="0 0 16 14"><path d="M0.5 13.5 V4.5 H2.5 L3.5 3 H7.5 L8.5 4.5 H13.5 V13.5 Z" fill="#808000" stroke="#000"/><path d="M11.5 1 h3 v3 M14.5 1 l-2.5 2.8" fill="none" stroke="#0000c0" stroke-width="1.1"/></svg>
<svg style="position:absolute;left:169px;top:124px;" width="16" height="16" viewBox="0 0 16 16"><rect width="16" height="16" fill="#fff"/><ellipse cx="8.3" cy="8.2" rx="3.9" ry="5.8" fill="#1818a8"/><ellipse cx="9" cy="7" rx="1.6" ry="3" fill="#2a20c0"/><path d="M3.8 3.8 Q5.6 0.4 10 0.2 L14.4 0.7 Q15.6 1.7 15 3 L8.2 3 Q6.2 3.1 5 4.6 Z" fill="#000"/><path d="M0.2 10.6 Q0.6 15.2 6 15.8 Q10.8 15.4 12.4 12 L10.6 11.2 Q8 13.4 5 13 Q2.8 12.6 2.2 10.6 Z" fill="#000"/><circle cx="2.9" cy="5.6" r="0.7" fill="#000"/><circle cx="1.1" cy="8.4" r="0.8" fill="#000"/><circle cx="3.3" cy="10" r="0.8" fill="#000"/><rect x="14" y="5" width="1" height="4.6" fill="#000"/></svg>
<div style="left:788px;top:122px;width:21px;height:21px;border-radius:3px;border:1px solid #fff;background:radial-gradient(circle at 25% 20%,#6a9cf8 0,#2c64e0 40%,#1848c8 80%,#1038a8 100%)"></div>
<div style="left:811px;top:122px;width:21px;height:21px;border-radius:3px;border:1px solid #fff;background:radial-gradient(circle at 25% 20%,#6a9cf8 0,#2c64e0 40%,#1848c8 80%,#1038a8 100%)"></div>
<div style="left:834px;top:122px;width:21px;height:21px;border-radius:3px;border:1px solid #fff;background:radial-gradient(circle at 30% 25%,#f0a080 0,#e0502c 35%,#c83410 75%,#b02808 100%)"></div>
<div style="left:793px;top:134px;width:7px;height:3px;background:#fff"></div>
<div style="left:816px;top:127px;width:11px;height:10px;border:1px solid #fff;border-top-width:3px"></div>
<svg style="position:absolute;left:834px;top:122px;" width="21" height="21" viewBox="0 0 21 21"><path d="M5.5 5.5 L15.5 15.5 M15.5 5.5 L5.5 15.5" stroke="#fff" stroke-width="2.2" stroke-linecap="round"/></svg>
<svg style="position:absolute;left:6px;top:636px;" width="17" height="17" viewBox="0 0 17 17"><path d="M10.5 5 L6.5 8.5 L10.5 12" fill="none" stroke="#4d6185" stroke-width="2"/></svg>
<svg style="position:absolute;left:1001px;top:636px;" width="17" height="17" viewBox="0 0 17 17"><path d="M6.5 5 L10.5 8.5 L6.5 12" fill="none" stroke="#4d6185" stroke-width="2"/></svg>
<div style="left:437px;top:641px;width:1px;height:7px;background:#eef4fe"></div>
<div style="left:439px;top:641px;width:1px;height:7px;background:#eef4fe"></div>
<div style="left:441px;top:641px;width:1px;height:7px;background:#eef4fe"></div>
<div style="left:443px;top:641px;width:1px;height:7px;background:#eef4fe"></div>
<svg style="position:absolute;left:655px;top:80px;" width="13" height="13" viewBox="0 0 13 13"><path d="M3 6 L5.5 8.5 L10 3.5" fill="none" stroke="#aca899" stroke-width="2"/></svg>
<svg style="position:absolute;left:10px;top:722px;" width="21" height="19" viewBox="-2 0 21 19"><path d="M1 3 Q5 0.5 9 3 L7.8 9 Q4 6.8 0 9 Z" fill="#e8502a"/><path d="M10 3.4 Q14 5.6 18.5 3 L17.2 9 Q13.2 11.4 8.8 9.2 Z" fill="#7fc241"/><path d="M-0.3 10.2 Q3.8 8 7.6 10.2 L6.4 16 Q2.6 13.8 -1.4 16 Z" fill="#3d8fe8"/><path d="M8.6 10.5 Q12.8 12.6 17 10.2 L15.8 16 Q11.6 18.4 7.4 16.2 Z" fill="#f8c525"/></svg>
<svg style="position:absolute;left:195px;top:724px;" width="16" height="16" viewBox="0 0 16 16"><circle cx="5" cy="4" r="2.6" fill="#58a0d8"/><path d="M0.5 14 Q1 7 5 7.5 Q8.5 7 9 14 Z" fill="#3a78c8"/><circle cx="11" cy="4.5" r="2.4" fill="#f0a040"/><path d="M7 15 Q7.5 8 11 8.5 Q15 8 15.5 15 Z" fill="#e87820"/><path d="M4 9 Q8 16 12 9" fill="#60b040"/></svg>
<svg style="position:absolute;left:217px;top:724px;" width="16" height="16" viewBox="0 0 16 16"><rect width="16" height="16" fill="#9a8a10"/><rect x="1" y="1" width="14" height="14" fill="#b0a018"/><circle cx="8" cy="8" r="5" fill="none" stroke="#fff" stroke-width="2"/><path d="M8 5v3.5h3" fill="none" stroke="#fff" stroke-width="1.4"/><rect x="11" y="2" width="3" height="3" fill="#b0a018"/></svg>
<svg style="position:absolute;left:240px;top:723px;overflow:visible;" width="17" height="17" viewBox="0 0 17 17"><circle cx="8" cy="9" r="6" fill="none" stroke="#3aa0f0" stroke-width="3"/><rect x="8" y="9.5" width="8" height="3" fill="#245edb"/><path d="M3 9h10" stroke="#3aa0f0" stroke-width="2"/><path d="M1 13 Q-1 6 8 2.5 Q14 0.5 16 3" fill="none" stroke="#f0c040" stroke-width="1.4"/></svg>
<svg style="position:absolute;left:302px;top:724px;" width="16" height="16" viewBox="0 0 16 16"><rect width="16" height="16" fill="#9a8a10"/><rect x="1" y="1" width="14" height="14" fill="#b0a018"/><circle cx="8" cy="8" r="5" fill="none" stroke="#fff" stroke-width="2"/><path d="M8 5v3.5h3" fill="none" stroke="#fff" stroke-width="1.4"/><rect x="11" y="2" width="3" height="3" fill="#b0a018"/></svg>
<svg style="position:absolute;left:422px;top:724px;" width="16" height="16" viewBox="0 0 16 16"><rect x="4.5" y="0.5" width="11" height="15" fill="#fff" stroke="#606080"/><path d="M7 3h7M7 5h7M7 7h7M7 9h7M7 11h7M7 13h7" stroke="#8090c0" stroke-width="0.8"/><rect x="0" y="3" width="10" height="9" fill="#1a2a9a"/><path d="M1.5 5 L3 10.5 L5 6.5 L7 10.5 L8.5 5" fill="none" stroke="#fff" stroke-width="1.3"/></svg>
<svg style="position:absolute;left:543px;top:724px;" width="16" height="16" viewBox="0 0 16 16"><rect width="16" height="16" fill="#fff"/><ellipse cx="8.3" cy="8.2" rx="3.9" ry="5.8" fill="#1818a8"/><ellipse cx="9" cy="7" rx="1.6" ry="3" fill="#2a20c0"/><path d="M3.8 3.8 Q5.6 0.4 10 0.2 L14.4 0.7 Q15.6 1.7 15 3 L8.2 3 Q6.2 3.1 5 4.6 Z" fill="#000"/><path d="M0.2 10.6 Q0.6 15.2 6 15.8 Q10.8 15.4 12.4 12 L10.6 11.2 Q8 13.4 5 13 Q2.8 12.6 2.2 10.6 Z" fill="#000"/><circle cx="2.9" cy="5.6" r="0.7" fill="#000"/><circle cx="1.1" cy="8.4" r="0.8" fill="#000"/><circle cx="3.3" cy="10" r="0.8" fill="#000"/><rect x="14" y="5" width="1" height="4.6" fill="#000"/></svg>
<svg style="position:absolute;left:663px;top:724px;" width="16" height="16" viewBox="0 0 16 16"><circle cx="5" cy="4" r="2.6" fill="#58a0d8"/><path d="M0.5 14 Q1 7 5 7.5 Q8.5 7 9 14 Z" fill="#3a78c8"/><circle cx="11" cy="4.5" r="2.4" fill="#f0a040"/><path d="M7 15 Q7.5 8 11 8.5 Q15 8 15.5 15 Z" fill="#e87820"/><path d="M4 9 Q8 16 12 9" fill="#60b040"/></svg>
<svg style="position:absolute;left:798px;top:724px;" width="16" height="17" viewBox="0 0 16 17"><circle cx="8" cy="6.5" r="6" fill="#2a62c8"/><path d="M4 3q3 1 2 4t3 3M10 1.5q1 3 -1 4" stroke="#58c848" stroke-width="2" fill="none"/><path d="M8 6 L14 12 H10.5 V16.5 H5.5 V12 H2 Z" fill="#30d030" stroke="#107010" stroke-width="0.7"/></svg><svg style="position:absolute;left:816px;top:724px;" width="16" height="16" viewBox="0 0 16 16"><rect x="5" y="0.5" width="10" height="8" fill="#b8c4e0" stroke="#404860"/><rect x="6.5" y="2" width="7" height="5" fill="#3858b0"/><rect x="0.5" y="5.5" width="10" height="8" fill="#c8d0e8" stroke="#404860"/><rect x="2" y="7" width="7" height="5" fill="#4868c0"/><rect x="3" y="14" width="6" height="1.5" fill="#909ab0"/></svg><svg style="position:absolute;left:834px;top:724px;" width="17" height="16" viewBox="0 0 17 16"><rect x="0.5" y="1.5" width="10" height="8" fill="#c8d0e8" stroke="#303850"/><rect x="2" y="3" width="7" height="5" fill="#283878"/><rect x="2" y="10.5" width="7" height="2" fill="#909ab0"/><path d="M12 2q2 3 0 6M14 0.5q3 4.5 0 9" stroke="#e8e8f0" fill="none" stroke-width="1.2"/><path d="M9 10 L15 16 M15 10 L9 16" stroke="#e01818" stroke-width="2.2"/></svg><svg style="position:absolute;left:852px;top:723px;" width="17" height="17" viewBox="0 0 17 17"><path d="M2 3 Q8 -1 15 3 Q16 11 8.5 16.5 Q1 11 2 3Z" fill="#48b828" stroke="#88d868" stroke-width="1"/><path d="M5 8.5 L7.5 11 L12 5.5" stroke="#fff" stroke-width="2.2" fill="none"/></svg><svg style="position:absolute;left:870px;top:723px;" width="16" height="17" viewBox="0 0 16 17"><circle cx="8" cy="8.5" r="7.5" fill="#f0c020" stroke="#c89000" stroke-width="0.8"/><path d="M4.5 4 q-1 6 3 6 q3 0 2.5 -6" fill="none" stroke="#202020" stroke-width="1.5"/><path d="M7.5 10 q0 3.5 3 3.5 q2.5 0 2.5 -3" fill="none" stroke="#202020" stroke-width="1.3"/><circle cx="13" cy="9.5" r="1.5" fill="#202020"/></svg><svg style="position:absolute;left:888px;top:723px;" width="17" height="17" viewBox="0 0 17 17"><circle cx="7" cy="7" r="6.3" fill="#8890a0" stroke="#404858" stroke-width="1"/><circle cx="7" cy="7" r="3" fill="#c8ccd8"/><circle cx="6" cy="6" r="1.3" fill="#505868"/><path d="M10 15 L15 9" stroke="#80a8e8" stroke-width="1.5"/></svg><svg style="position:absolute;left:905px;top:724px;" width="18" height="16" viewBox="0 0 18 16"><path d="M9 0.5 L17.5 8 L9 15.5 L0.5 8 Z" fill="#187040" stroke="#e8e020" stroke-width="1"/><rect x="0.5" y="4.5" width="17" height="7" fill="#f0e828" stroke="#283020" stroke-width="0.6"/><text x="9" y="10.6" font-family="Liberation Sans" font-weight="bold" font-size="7.5" text-anchor="middle" fill="#102010">SOS</text></svg><svg style="position:absolute;left:925px;top:723px;" width="15" height="17" viewBox="0 0 15 17"><rect width="15" height="17" fill="#b8b8c0"/><rect x="7" y="9" width="8" height="8" fill="#fff"/><path d="M8 10h3v3h3v3h-3v-3h-3z" fill="#d82020"/><rect x="2" y="10" width="4" height="6" fill="#404048"/><circle cx="7" cy="5.5" r="4.8" fill="#e02020"/><circle cx="5.5" cy="4" r="1.5" fill="#f88080"/></svg><svg style="position:absolute;left:942px;top:723px;" width="16" height="17" viewBox="0 0 16 17"><rect width="16" height="17" fill="#080860"/><circle cx="8" cy="8.5" r="2" fill="#f8e020"/><path d="M5 5 q-3 3.5 0 7 M11 5 q3 3.5 0 7" stroke="#f8e020" stroke-width="1.2" fill="none"/><path d="M3 3.5 q-3.5 5 0 10 M13 3.5 q3.5 5 0 10" stroke="#f8e020" stroke-width="1" fill="none"/></svg><svg style="position:absolute;left:960px;top:723px;" width="16" height="17" viewBox="0 0 16 17"><circle cx="7" cy="4" r="3" fill="#70c8a0"/><path d="M1 16 Q1.5 8 7 8 Q12.5 8 13 16 Z" fill="#48a878"/><path d="M10 9 L15.5 11 L13.5 16.5 L9 15 Z" fill="#e88828"/><circle cx="6" cy="3" r="1" fill="#c0f0d8"/></svg>
</div>

</body></html>
